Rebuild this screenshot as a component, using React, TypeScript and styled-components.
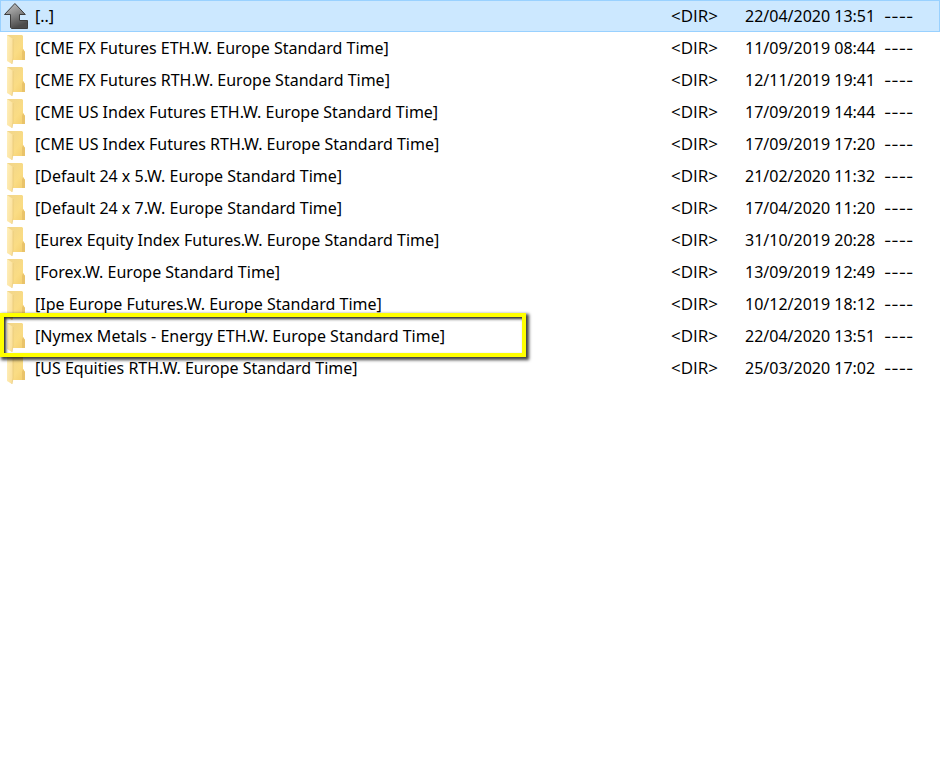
import React from "react";
import styled, { createGlobalStyle, css } from "styled-components";

const GlobalStyle = createGlobalStyle`
  body {
    margin: 0;
    background: #ffffff;
    color: #000000;
    font-family: "Noto Sans", "Open Sans", sans-serif;
    font-size: 16px;
    line-height: 20px;
  }
`;

const FileTable = styled.table`
  width: 100%;
  table-layout: fixed;
  border-collapse: collapse;
`;

const DirColumn = styled.col`
  width: 74px;
`;

const DateColumn = styled.col`
  width: 139px;
`;

const AttributeColumn = styled.col`
  width: 56px;
`;

const Row = styled.tr<{ $selected: boolean }>`
  height: 32px;
  ${({ $selected }) =>
    $selected &&
    css`
      background: #cce8ff;
      outline: 1px solid #99d1ff;
      outline-offset: -1px;
    `}
`;

const Cell = styled.td`
  padding: 0;
  white-space: nowrap;
`;

const TypeCell = styled(Cell)`
  font-family: "Open Sans", "Noto Sans", sans-serif;
  font-size: 17px;
`;

const AttributeCell = styled(Cell)`
  font-family: Inter, sans-serif;
`;

const NameCell = styled.td`
  position: relative;
  padding: 0;
`;

const NameLine = styled.div`
  display: flex;
  align-items: center;
  height: 32px;
  padding-left: 3px;
  gap: 4px;
  white-space: nowrap;
`;

const Icon = styled.svg`
  flex: none;
  width: 28px;
  height: 32px;
`;

const Highlight = styled.div`
  position: absolute;
  z-index: 1;
  top: -7px;
  left: 0;
  box-sizing: border-box;
  width: 526px;
  max-width: 100%;
  height: 44px;
  border: 4px solid #ffff00;
  box-shadow:
    2px 2px 3px 1px rgba(0, 0, 0, 0.75),
    inset 2px 2px 3px 0 rgba(0, 0, 0, 0.85);
  pointer-events: none;
`;

type Entry = {
  name: string;
  date: string;
  kind?: "parent";
  marked?: boolean;
};

const entries: Entry[] = [
  { name: "[..]", date: "22/04/2020 13:51", kind: "parent" },
  { name: "[CME FX Futures ETH.W. Europe Standard Time]", date: "11/09/2019 08:44" },
  { name: "[CME FX Futures RTH.W. Europe Standard Time]", date: "12/11/2019 19:41" },
  { name: "[CME US Index Futures ETH.W. Europe Standard Time]", date: "17/09/2019 14:44" },
  { name: "[CME US Index Futures RTH.W. Europe Standard Time]", date: "17/09/2019 17:20" },
  { name: "[Default 24 x 5.W. Europe Standard Time]", date: "21/02/2020 11:32" },
  { name: "[Default 24 x 7.W. Europe Standard Time]", date: "17/04/2020 11:20" },
  { name: "[Eurex Equity Index Futures.W. Europe Standard Time]", date: "31/10/2019 20:28" },
  { name: "[Forex.W. Europe Standard Time]", date: "13/09/2019 12:49" },
  { name: "[Ipe Europe Futures.W. Europe Standard Time]", date: "10/12/2019 18:12" },
  { name: "[Nymex Metals - Energy ETH.W. Europe Standard Time]", date: "22/04/2020 13:51", marked: true },
  { name: "[US Equities RTH.W. Europe Standard Time]", date: "25/03/2020 17:02" },
];

function ParentIcon() {
  return (
    <Icon viewBox="0 0 28 32" aria-hidden="true">
      <defs>
        <linearGradient id="arrowFill" x1="0" y1="0" x2="0.4" y2="1">
          <stop offset="0" stopColor="#c8c8c8" />
          <stop offset="0.45" stopColor="#929292" />
          <stop offset="1" stopColor="#4c4c4c" />
        </linearGradient>
      </defs>
      <path
        d="M11.9 3.5 22.3 14.5H16.5V20.5H24.5V28.5H8.5L7.5 27.5V14.5H1.5Z"
        fill="url(#arrowFill)"
        stroke="#3e3e3e"
        strokeLinejoin="round"
      />
    </Icon>
  );
}

function FolderIcon() {
  return (
    <Icon viewBox="0 0 28 32" aria-hidden="true">
      <defs>
        <linearGradient id="folderBack" x1="0" y1="0" x2="1" y2="1">
          <stop offset="0" stopColor="#f0d58c" />
          <stop offset="0.6" stopColor="#fadc84" />
          <stop offset="1" stopColor="#f3cd6c" />
        </linearGradient>
        <linearGradient id="folderFlap" x1="0" y1="0" x2="1" y2="0.4">
          <stop offset="0" stopColor="#fff0bd" />
          <stop offset="1" stopColor="#fbe09a" />
        </linearGradient>
      </defs>
      <path d="M4 3H19L20 4V17L22 20V28H9L4 29Z" fill="url(#folderBack)" />
      <path d="M20 17 22 20V28H19V20Z" fill="#e9c36a" />
      <path d="M4 3 10 7V26L9 32L4 29Z" fill="url(#folderFlap)" />
      <path d="M10 7V26L9 32" fill="none" stroke="#e7c878" strokeOpacity="0.7" />
    </Icon>
  );
}

export default function App() {
  return (
    <main>
      <GlobalStyle />
      <FileTable aria-label="Folder contents">
        <colgroup>
          <col />
          <DirColumn />
          <DateColumn />
          <AttributeColumn />
        </colgroup>
        <tbody>
          {entries.map((entry) => (
            <Row key={entry.name} $selected={entry.kind === "parent"}>
              <NameCell>
                <NameLine>
                  {entry.kind === "parent" ? <ParentIcon /> : <FolderIcon />}
                  <span>{entry.name}</span>
                </NameLine>
                {entry.marked && <Highlight />}
              </NameCell>
              <TypeCell>&lt;DIR&gt;</TypeCell>
              <Cell>{entry.date}</Cell>
              <AttributeCell>----</AttributeCell>
            </Row>
          ))}
        </tbody>
      </FileTable>
    </main>
  );
}
